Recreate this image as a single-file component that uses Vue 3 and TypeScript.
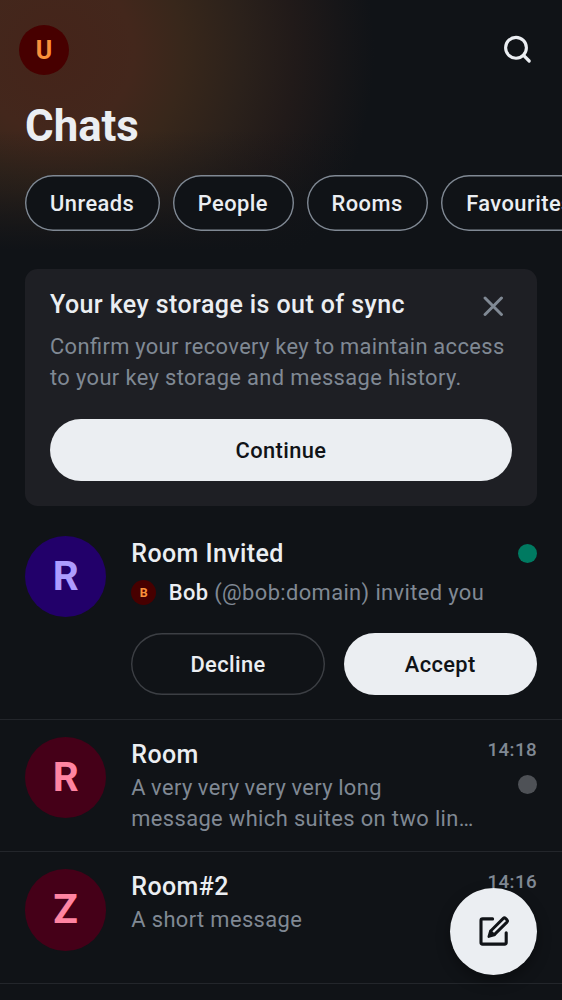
<script setup lang="ts">
interface Room {
  name: string
  initial: string
  lines: string[]
  time: string
  dot: boolean
}

const filters: string[] = ['Unreads', 'People', 'Rooms', 'Favourites']

const rooms: Room[] = [
  {
    name: 'Room',
    initial: 'R',
    lines: ['A very very very very long', 'message which suites on two lin…'],
    time: '14:18',
    dot: true,
  },
  { name: 'Room#2', initial: 'Z', lines: ['A short message'], time: '14:16', dot: false },
]
</script>

<template>
  <main class="screen">
    <header class="header">
      <div class="top-bar">
        <div class="avatar user">U</div>
        <svg class="search" viewBox="0 0 38 38" fill="none" stroke="currentColor" stroke-linecap="round">
          <circle cx="18" cy="17.8" r="10.4" stroke-width="3.1" />
          <path d="M25.6 25.4 31.2 31" stroke-width="3.2" />
        </svg>
      </div>
      <h1>Chats</h1>
      <nav class="filters">
        <button v-for="filter in filters" :key="filter" class="chip">{{ filter }}</button>
      </nav>
    </header>

    <section class="banner">
      <div class="banner-head">
        <h2>Your key storage is out of sync</h2>
        <svg class="close" viewBox="0 0 20 20" fill="none" stroke="currentColor" stroke-width="2.9" stroke-linecap="round">
          <path d="M2 2 18 18M18 2 2 18" />
        </svg>
      </div>
      <p><span class="tight">Confirm your recovery key to maintain access</span><br />to your key storage and message history.</p>
      <button class="button filled">Continue</button>
    </section>

    <article class="row invite">
      <div class="avatar large purple">R</div>
      <div class="content">
        <div class="line">
          <h3>Room Invited</h3>
          <span class="dot green"></span>
        </div>
        <div class="sender">
          <span class="avatar tiny">B</span>
          <span><strong>Bob</strong> (@bob:domain) invited you</span>
        </div>
        <div class="actions">
          <button class="button outlined">Decline</button>
          <button class="button filled">Accept</button>
        </div>
      </div>
    </article>

    <article v-for="room in rooms" :key="room.name" class="row">
      <div class="avatar large pink">{{ room.initial }}</div>
      <div class="content">
        <div class="line">
          <h3>{{ room.name }}</h3>
          <time>{{ room.time }}</time>
        </div>
        <div class="line preview-line">
          <p class="preview">
            <span v-for="(line, i) in room.lines" :key="line" :class="{ tight: room.lines.length > 1 && i === 0 }">{{ line }}</span>
          </p>
          <span v-if="room.dot" class="dot grey"></span>
        </div>
      </div>
    </article>

    <button class="fab" aria-label="New chat">
      <svg viewBox="0 0 37.5 37.5" fill="none" stroke="currentColor" stroke-width="3.1" stroke-linejoin="round">
        <path d="M17.6 5.9H7.6a1.6 1.6 0 0 0-1.6 1.6v22a1.6 1.6 0 0 0 1.6 1.6h22a1.6 1.6 0 0 0 1.6-1.6V19.8" stroke-linecap="round" />
        <path d="M15.4 18.2 28.3 5.4a1.6 1.6 0 0 1 2.2 0l1.5 1.5a1.6 1.6 0 0 1 0 2.2L19.1 21.9" stroke-width="2.9" />
        <path d="M15.4 18.2 19.2 22 13.8 23.6Z" fill="currentColor" stroke-width="2.6" />
      </svg>
    </button>
  </main>
</template>

<style>
body {
  background: #101317;
}
</style>

<style scoped>
.screen {
  position: relative;
  width: 562px;
  height: 1000px;
  overflow: hidden;
  background: #101317;
  color: #ebeef2;
  font-family: Roboto, 'Liberation Sans', sans-serif;
  font-size: 21.87px;
  line-height: 31.25px;
  letter-spacing: 0.39px;
}

h1,
h2,
h3,
p {
  margin: 0;
}

button {
  box-sizing: border-box;
  padding: 0;
  font: inherit;
  font-weight: 500;
  letter-spacing: 0.4px;
  color: inherit;
}

.header {
  height: 269px;
  background:
    linear-gradient(to bottom, rgba(16, 19, 23, 0) 130px, rgba(16, 19, 23, 0.42) 190px, #101317 250px),
    radial-gradient(circle at 54px 52px, #45241a 0, #43271c 80px, #38271b 130px, #2b211b 190px, #211a19 240px, #171618 285px, #101317 320px);
}

.top-bar {
  display: flex;
  justify-content: space-between;
  align-items: flex-start;
  padding: 25px 26px 0 19px;
}

.avatar {
  display: flex;
  flex-shrink: 0;
  align-items: center;
  justify-content: center;
  border-radius: 50%;
  font-weight: 700;
  letter-spacing: 0;
}

.user {
  box-sizing: border-box;
  width: 50px;
  height: 50px;
  padding-top: 1px;
  background: #470000;
  color: #fa913b;
  font-size: 25px;
}

.search {
  width: 38px;
  height: 38px;
  margin-top: 5px;
}

h1 {
  margin: 25px 0 0 25px;
  font-size: 43.75px;
  line-height: 53px;
  font-weight: 700;
  letter-spacing: 0;
}

.filters {
  display: flex;
  gap: 12.7px;
  margin: 22px 0 0 25px;
}

.chip {
  flex-shrink: 0;
  height: 56px;
  padding: 1px 25.8px 0 25px;
  border: 0;
  border-radius: 28px;
  background: #101317;
  box-shadow: inset 0 0 0 1.4px #808994;
  letter-spacing: 0.46px;
}

.banner {
  box-sizing: border-box;
  width: 512px;
  height: 237px;
  margin-left: 25px;
  padding: 18px 25px 0;
  border-radius: 12.5px;
  background: #1e1f24;
}

.banner-head {
  display: flex;
  align-items: center;
  justify-content: space-between;
}

h2,
h3 {
  font-size: 25px;
  line-height: 35px;
  font-weight: 500;
  letter-spacing: 0.41px;
}

.close {
  width: 20.5px;
  height: 20.5px;
  margin: 3px 8.5px 0 0;
  color: #808994;
}

.banner p {
  margin-top: 9px;
  color: #808994;
  white-space: nowrap;
}

.tight {
  word-spacing: -0.6px;
}

.banner .tight {
  font-feature-settings: 'liga' 1;
  word-spacing: -0.45px;
}

.button {
  height: 62px;
  padding-top: 1px;
  border: 0;
  border-radius: 31px;
}

.filled {
  background: #ebeef2;
  color: #101317;
}

.banner .button {
  width: 462px;
  margin-top: 25.5px;
}

.row {
  box-sizing: border-box;
  display: flex;
  gap: 25px;
  height: 132.2px;
  padding: 17.7px 25px 0;
  border-bottom: 1px solid #23262b;
}

.invite {
  height: 213.5px;
  padding-top: 29.5px;
}

.large {
  width: 81.25px;
  height: 81.25px;
  font-size: 40.6px;
}

.purple {
  background: #22006a;
  color: #ad9cfe;
}

.pink {
  background: #450018;
  color: #ff84a2;
}

.content {
  flex: 1;
  min-width: 0;
}

.line {
  display: flex;
  align-items: center;
  justify-content: space-between;
}

.sender {
  display: flex;
  align-items: center;
  gap: 12.5px;
  margin-top: 6px;
  color: #808994;
  white-space: nowrap;
}

.sender strong {
  font-weight: 500;
  color: #ebeef2;
}

.tiny {
  width: 25px;
  height: 25px;
  background: #470000;
  color: #fa913b;
  font-size: 12.5px;
}

.actions {
  display: grid;
  grid-template-columns: 1fr 1fr;
  gap: 18.75px;
  margin-top: 25px;
}

.outlined {
  background: transparent;
  box-shadow: inset 0 0 0 1.4px #3c3f44;
}

.dot {
  flex-shrink: 0;
  width: 19px;
  height: 19px;
  border-radius: 50%;
}

.green {
  background: #007a61;
}

.grey {
  margin-top: 2.8px;
  background: #4e5156;
}

time {
  margin-top: -9px;
  font-size: 18.75px;
  line-height: 26px;
  font-weight: 500;
  letter-spacing: 0.4px;
  color: #808994;
}

.preview-line {
  align-items: flex-start;
}

.preview {
  color: #808994;
  white-space: nowrap;
}

.preview span {
  display: block;
}

.fab {
  position: absolute;
  right: 25px;
  bottom: 25px;
  display: flex;
  align-items: center;
  justify-content: center;
  width: 87.5px;
  height: 87.5px;
  border: 0;
  border-radius: 50%;
  background: #ebeef2;
  color: #101317;
  box-shadow: 0 6px 14px rgba(0, 0, 0, 0.35);
}

.fab svg {
  width: 37.5px;
  height: 37.5px;
}
</style>
